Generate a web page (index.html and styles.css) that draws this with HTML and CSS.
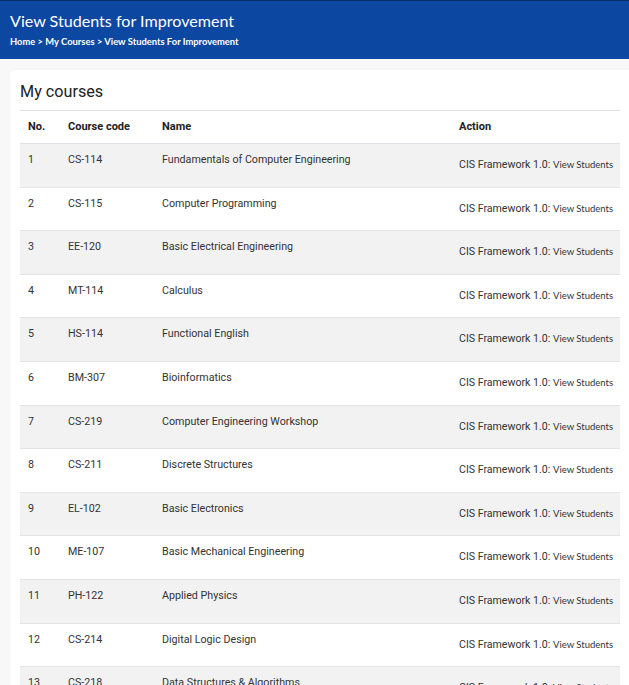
FILE: index.html
```html
<!DOCTYPE html>
<html>
<head>
<meta charset="utf-8">
<link rel="stylesheet" href="styles.css">
</head>
<body>
<header class="banner">
  <h1 class="title">View Students for Improvement</h1>
  <nav class="crumbs"><a>Home</a> <span class="sep">&gt;</span> <a>My Courses</a> <span class="sep">&gt;</span> <a>View Students For Improvement</a></nav>
</header>
<main class="page">
  <section class="card">
    <h2 class="card-title">My courses</h2>
    <table class="courses">
      <colgroup><col class="c-no"><col class="c-code"><col class="c-name"><col class="c-act"></colgroup>
      <thead>
        <tr><th>No.</th><th>Course code</th><th>Name</th><th>Action</th></tr>
      </thead>
      <tbody>
        <tr><td>1</td><td>CS-114</td><td>Fundamentals of Computer Engineering</td><td class="act">CIS Framework 1.0: <a>View Students</a></td></tr>
        <tr><td>2</td><td>CS-115</td><td>Computer Programming</td><td class="act">CIS Framework 1.0: <a>View Students</a></td></tr>
        <tr><td>3</td><td>EE-120</td><td>Basic Electrical Engineering</td><td class="act">CIS Framework 1.0: <a>View Students</a></td></tr>
        <tr><td>4</td><td>MT-114</td><td>Calculus</td><td class="act">CIS Framework 1.0: <a>View Students</a></td></tr>
        <tr><td>5</td><td>HS-114</td><td>Functional English</td><td class="act">CIS Framework 1.0: <a>View Students</a></td></tr>
        <tr><td>6</td><td>BM-307</td><td>Bioinformatics</td><td class="act">CIS Framework 1.0: <a>View Students</a></td></tr>
        <tr><td>7</td><td>CS-219</td><td>Computer Engineering Workshop</td><td class="act">CIS Framework 1.0: <a>View Students</a></td></tr>
        <tr><td>8</td><td>CS-211</td><td>Discrete Structures</td><td class="act">CIS Framework 1.0: <a>View Students</a></td></tr>
        <tr><td>9</td><td>EL-102</td><td>Basic Electronics</td><td class="act">CIS Framework 1.0: <a>View Students</a></td></tr>
        <tr><td>10</td><td>ME-107</td><td>Basic Mechanical Engineering</td><td class="act">CIS Framework 1.0: <a>View Students</a></td></tr>
        <tr><td>11</td><td>PH-122</td><td>Applied Physics</td><td class="act">CIS Framework 1.0: <a>View Students</a></td></tr>
        <tr><td>12</td><td>CS-214</td><td>Digital Logic Design</td><td class="act">CIS Framework 1.0: <a>View Students</a></td></tr>
        <tr><td>13</td><td>CS-218</td><td>Data Structures &amp; Algorithms</td><td class="act">CIS Framework 1.0: <a>View Students</a></td></tr>
        <tr><td>14</td><td>CS-220</td><td>Operating Systems</td><td class="act">CIS Framework 1.0: <a>View Students</a></td></tr>
      </tbody>
    </table>
  </section>
</main>
</body>
</html>
```
FILE: styles.css
```css
html, body {
  margin: 0;
  padding: 0;
}
body {
  background: #f8f8f8;
  font-family: Roboto, "Liberation Sans", sans-serif;
  color: #333;
  overflow: hidden;
  height: 685px;
}
.banner {
  background: #0c47a1;
  border-top: 1px solid #062c6a;
  padding: 10px 10px 10px;
  height: 38px;
}
.title {
  margin: 0;
  font-family: Lato, "Open Sans", sans-serif;
  font-weight: 400;
  font-size: 16.1px;
  line-height: 20px;
  color: #fff;
}
.crumbs {
  margin-top: 5px;
  font-family: Lato, "Open Sans", sans-serif;
  font-weight: 700;
  font-size: 9.4px;
  line-height: 12px;
  color: #fff;
}
.page {
  padding: 11px 0 0 10px;
}
.card {
  background: #fff;
  border-radius: 4px 0 0 0;
  padding: 11px 0 0 10px;
  box-shadow: 0 0 1px rgba(0,0,0,0.08);
}
.card-title {
  margin: 0 0 7px;
  font-size: 16.2px;
  font-weight: 400;
  line-height: 22px;
  color: #222;
}
.courses {
  width: 600px;
  border-collapse: collapse;
  table-layout: fixed;
  font-size: 10.7px;
  color: #333;
}
.c-no { width: 40px; }
.c-code { width: 94px; }
.c-name { width: 297px; }
.c-act { width: 169px; }
.courses th {
  text-align: left;
  font-weight: 700;
  font-size: 11px;
  color: #222;
  padding: 9px 8px;
  line-height: 14px;
  border-top: 1px solid #dee2e6;
  border-bottom: 1px solid #dee2e6;
}
.courses td {
  padding: 9px 8px 0;
  height: 33.6px;
  line-height: 14px;
  vertical-align: top;
  border-top: 1px solid #e4e4e4;
  box-sizing: content-box;
}
.courses tbody tr:nth-child(odd) td {
  background: #f2f2f2;
}
.courses td.act {
  padding-top: 14px;
  height: 28.6px;
  font-size: 10.6px;
  white-space: nowrap;
}
.act a {
  font-family: Lato, "Open Sans", sans-serif;
  font-size: 9.5px;
  color: #333;
}
```
